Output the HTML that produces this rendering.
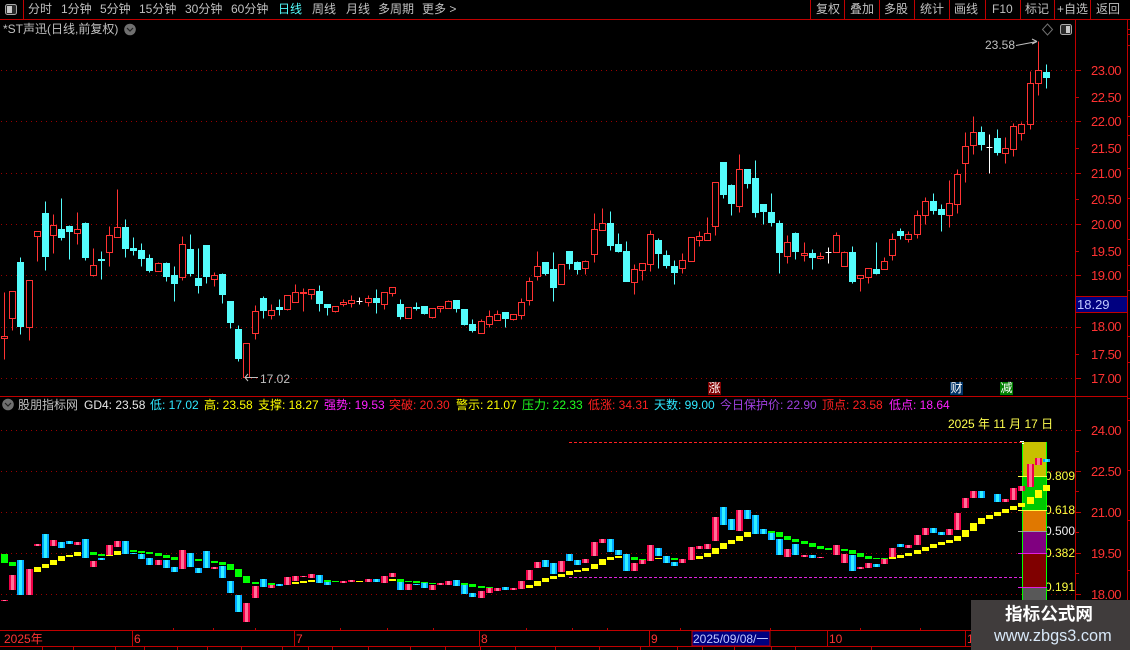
<!DOCTYPE html>
<html><head><meta charset="utf-8"><style>
html,body{margin:0;padding:0;background:#000}
#p{position:relative;width:1130px;height:650px;overflow:hidden;background:#000;font:12px/12px "Liberation Sans","WenQuanYi Zen Hei","Noto Sans CJK SC",sans-serif;color:#c0c0c0}
#p>svg{position:absolute;left:0;top:0}
.t{position:absolute;white-space:nowrap}
.a{position:absolute;left:1091px;color:#ff3232;font-size:13px;letter-spacing:-.5px;white-space:nowrap;margin-top:1px}
.f{position:absolute;left:1047px;width:28px;overflow:hidden;white-space:nowrap;text-indent:-2px;color:#ffff40}
.m{position:absolute;width:13px;height:13px;color:#fff;text-align:center;line-height:13px}
</style></head><body><div id="p">
<svg width="1130" height="650" viewBox="0 0 1130 650">
<defs>
<path id="pk" d="M4 600V601M12 575V590M29 569V595M37 544V546M53 540V546M77 542V545M93 561V567M109 545V555M117 541V547M158 560V565M182 550V569M214 567V569M246 603V622M255 586V598M271 585V588M287 577V585M295 576V581M303 576V577M311 574V578M343 581V583M351 580V582M368 579V582M384 576V583M392 573V577M408 584V590M432 585V590M440 583V585M448 581V585M481 591V598M489 588V593M497 588V591M513 588V590M521 581V589M529 570V580M537 562V568M561 561V572M585 559V563M594 542V556M602 539V543M634 563V571M642 560V564M650 545V561M682 559V563M691 547V560M699 546V549M707 544V549M715 517V541M739 510V531M787 549V557M804 555V557M820 557V558M836 545V555M844 554V563M860 567V569M868 563V568M884 559V564M892 548V557M908 545V548M917 535V545M925 528V535M949 529V535M957 513V530M965 498V508M973 491V498M1005 499V502M1013 488V500M1021 486V491M1030 464V487M1038 458V465"/>
<path id="bl" d="M20 560V595M45 534V558M61 542V548M69 541V544M85 539V558M101 558V560M125 541V554M133 553V554M141 554V559M149 558V565M166 560V568M174 567V572M190 553V567M198 568V573M206 551V568M222 566V578M230 581V593M238 595V612M263 579V587M279 584V586M319 575V583M327 582V585M376 579V582M400 582V590M416 584V585M424 583V588M456 580V586M464 585V594M472 593V597M505 587V590M545 560V567M553 563V574M569 554V561M577 560V565M610 539V552M618 550V555M626 554V571M658 548V556M666 556V563M674 562V566M723 507V525M731 519V530M747 510V519M755 515V534M763 529V534M771 533V540M779 539V555M795 544V555M812 555V558M852 555V571M876 564V567M900 544V547M933 528V533M941 532V535M981 491V498M997 494V502M1046 459V462"/>
</defs>
<g stroke="#990000" stroke-width="1" stroke-dasharray="1 4" fill="none">
<path d="M1 70.5H1075M1 121.5H1075M1 173.5H1075M1 224.5H1075M1 275.5H1075M1 327.5H1075M1 378.5H1075M1 430.5H1075M1 471.5H1075M1 512.5H1075M1 553.5H1075M1 594.5H1075"/>
</g>
<g transform="translate(.5 .5)" fill="none" shape-rendering="crispEdges">
<path stroke="#ff3232" d="M4 292V359M12 291V330M29 280V340M37 231V261M53 214V253M77 212V244M93 248V276M109 226V266M117 189V237M158 262V271M182 236V280M214 272V286M246 343V377M255 305V339M271 304V319M287 295V310M295 284V302M303 288V311M311 289V299M335 306V312M343 299V306M351 295V307M368 295V306M384 292V309M392 287V296M408 307V318M432 308V318M440 306V312M448 300V308M481 319V333M489 310V327M497 310V320M513 314V320M521 298V319M529 277V305M537 251V280M561 264V284M585 260V274M594 213V262M602 208V230M634 264V294M642 263V280M650 230V271M682 253V273M691 237V261M699 231V246M707 217V240M715 182V235M739 154V212M787 235V263M804 242V261M820 252V259M836 232V252M844 251V266M860 275V291M868 268V283M884 257V269M892 233V260M908 231V242M917 210V238M925 197V224M949 180V227M957 169V213M965 132V182M973 116V154M1005 137V163M1013 123V156M1021 122V140M1030 71V129M1038 41V95"/>
<path stroke="#ff3232" fill="#000" d="M1 336h6v2h-6zM9 291h6v27h-6zM26 280h6v47h-6zM34 231h6v5h-6zM50 225h6v10h-6zM74 229h6v4h-6zM90 265h6v10h-6zM106 235h6v17h-6zM114 227h6v10h-6zM155 263h6v8h-6zM179 244h6v33h-6zM211 275h6v4h-6zM243 343h6v34h-6zM252 311h6v22h-6zM268 310h6v5h-6zM284 295h6v14h-6zM292 292h6v10h-6zM300 292h6v1h-6zM308 289h6v5h-6zM332 306h6v5h-6zM340 302h6v2h-6zM348 300h6v3h-6zM365 298h6v4h-6zM381 292h6v12h-6zM389 287h6v6h-6zM405 307h6v11h-6zM429 308h6v9h-6zM437 306h6v2h-6zM445 301h6v7h-6zM478 321h6v12h-6zM486 316h6v8h-6zM494 314h6v6h-6zM510 314h6v5h-6zM518 302h6v13h-6zM526 281h6v19h-6zM534 266h6v10h-6zM558 264h6v20h-6zM582 261h6v7h-6zM591 229h6v25h-6zM599 223h6v7h-6zM631 269h6v13h-6zM639 263h6v7h-6zM647 234h6v30h-6zM679 260h6v8h-6zM688 237h6v24h-6zM696 236h6v4h-6zM704 233h6v7h-6zM712 182h6v44h-6zM736 169h6v37h-6zM784 242h6v14h-6zM801 253h6v2h-6zM817 256h6v2h-6zM833 235h6v17h-6zM841 252h6v14h-6zM857 275h6v3h-6zM865 268h6v9h-6zM881 261h6v8h-6zM889 239h6v16h-6zM905 234h6v5h-6zM914 215h6v19h-6zM922 201h6v14h-6zM946 203h6v12h-6zM954 174h6v30h-6zM962 146h6v17h-6zM970 132h6v13h-6zM1002 148h6v5h-6zM1010 126h6v23h-6zM1018 124h6v9h-6zM1027 83h6v41h-6zM1035 70h6v13h-6z"/>
<path stroke="#54fcfc" d="M20 257V334M45 201V270M61 198V240M69 225V259M85 222V260M101 251V279M125 219V257M133 237V255M141 243V266M149 254V272M166 262V281M174 266V301M190 234V276M198 248V293M206 245V283M222 273V303M230 301V328M238 325V361M263 296V318M279 299V315M319 285V311M327 304V315M376 289V313M400 299V319M416 302V310M424 306V314M456 300V312M464 309V325M472 319V332M505 312V327M545 262V275M553 252V301M569 251V269M577 261V274M610 211V250M618 233V252M626 241V281M658 238V268M666 250V268M674 260V284M723 162V198M731 184V215M747 169V188M755 160V217M763 204V224M771 193V226M779 220V273M795 232V259M812 249V269M852 246V283M876 242V274M900 228V239M933 193V214M941 204V231M981 126V150M997 129V155M1046 64V88"/>
<path stroke="#54fcfc" fill="#54fcfc" d="M17 262h6v64h-6zM42 213h6v43h-6zM58 229h6v8h-6zM66 226h6v5h-6zM82 223h6v34h-6zM98 259h6v1h-6zM122 227h6v21h-6zM130 248h6v2h-6zM138 250h6v8h-6zM146 258h6v12h-6zM163 263h6v13h-6zM171 275h6v8h-6zM187 249h6v24h-6zM195 278h6v7h-6zM203 245h6v31h-6zM219 274h6v20h-6zM227 301h6v21h-6zM235 329h6v29h-6zM260 298h6v12h-6zM276 307h6v2h-6zM316 291h6v12h-6zM324 304h6v3h-6zM373 298h6v4h-6zM397 304h6v12h-6zM413 307h6v1h-6zM421 306h6v7h-6zM453 300h6v8h-6zM461 309h6v15h-6zM469 324h6v6h-6zM502 312h6v6h-6zM542 262h6v11h-6zM550 269h6v18h-6zM566 251h6v12h-6zM574 262h6v7h-6zM607 223h6v22h-6zM615 244h6v7h-6zM623 251h6v30h-6zM655 240h6v13h-6zM663 255h6v10h-6zM671 266h6v6h-6zM720 162h6v32h-6zM728 185h6v18h-6zM744 169h6v14h-6zM752 178h6v34h-6zM760 204h6v7h-6zM768 212h6v10h-6zM776 223h6v29h-6zM792 233h6v18h-6zM809 253h6v4h-6zM849 252h6v29h-6zM873 269h6v4h-6zM897 231h6v4h-6zM930 201h6v9h-6zM938 209h6v5h-6zM978 132h6v12h-6zM994 138h6v14h-6zM1043 72h6v5h-6z"/>
<path stroke="#fff" d="M359 297V304M356 301H362M828 247V263M825 252H831M989 134V173M986 147H992"/>
</g>
<g fill="none" stroke="#c0c0c0">
<path d="M245 377.5H258M245 377.5L248 374M245 377.5L248 381"/>
<path d="M1016 45.5L1037 41.5M1037 41.5L1032 39M1037 41.5L1032 44"/>
</g>
<g fill="none" stroke="#c00000" shape-rendering="crispEdges">
<path d="M0 19.5H1130M23.5 0V19M810.5 0V19M844.5 0V19M879.5 0V19M914.5 0V19M949.5 0V19M985.5 0V19M1020.5 0V19M1054.5 0V19M1090.5 0V19M1075.5 19V646M1127.5 20V630M0 396.5H1127"/>
<path d="M1075 70.5H1081M1075 97.5H1079M1075 121.5H1081M1075 148.5H1079M1075 173.5H1081M1075 199.5H1079M1075 224.5H1081M1075 251.5H1079M1075 275.5H1081M1075 327.5H1081M1075 354.5H1079M1075 378.5H1081M1075 430.5H1081M1075 451.5H1079M1075 471.5H1081M1075 491.5H1079M1075 512.5H1081M1075 532.5H1079M1075 553.5H1081M1075 573.5H1079M1075 594.5H1081"/>
<path d="M1127 239.5H1130M1127 336.5H1130M1128 29.5H1130M1128 34.5H1130M1128 45.5H1130M1128 116.5H1130M1128 135.5H1130M1128 168.5H1130M1128 198.5H1130M1128 265.5H1130M1128 290.5H1130M1128 362.5H1130M1128 398.5H1130M1128 420.5H1130M1128 470.5H1130M1128 520.5H1130M1128 570.5H1130"/>
<path d="M0 630.5H1075M0 646.5H1075M132.5 630V646M294.5 630V646M479.5 630V646M649.5 630V646M827.5 630V646M965.5 630V646M173.5 628V630M213.5 628V630M255.5 628V630M340.5 628V630M387.5 628V630M433.5 628V630M526.5 628V630M572.5 628V630M607.5 628V630M680.5 628V630M770.5 628V630M860.5 628V630M920.5 628V630M42.5 646V650M73.5 646V650M115.5 646V650M144.5 646V650M177.5 646V650M207.5 646V650M241.5 646V650M282.5 646V650M308.5 646V650M332.5 646V650M368.5 646V650M410.5 646V650M445.5 646V650M480.5 646V650M515.5 646V650M555.5 646V650M599.5 646V650M640.5 646V650M677.5 646V650M702.5 646V650M734.5 646V650M771.5 646V650M795.5 646V650M871.5 646V650"/>
</g>
<rect x="692" y="631" width="78" height="15" fill="#000080" stroke="#c00000"/>
<rect x="1075.5" y="296.5" width="52" height="16" fill="#000080" stroke="#c00000"/>
<g fill="none" stroke-dasharray="3 2" shape-rendering="crispEdges">
<path stroke="#ff2020" d="M569 442.5H1022"/>
<path stroke="#e020e0" d="M569 577.5H1022"/>
</g>
<rect x="1023" y="442" width="23" height="35" fill="#c8c000"/>
<rect x="1023" y="477" width="23" height="33" fill="#00c800"/>
<rect x="1023" y="511" width="23" height="21" fill="#e07800"/>
<rect x="1023" y="532" width="23" height="22" fill="#800080"/>
<rect x="1023" y="554" width="23" height="33" fill="#800000"/>
<rect x="1023" y="587" width="23" height="20" fill="#585858"/>
<g shape-rendering="crispEdges" fill="none">
<path stroke="#00ff00" d="M1022.5 442V610M1046.5 442V610"/>
<path stroke="#ffff40" d="M1018 476.5H1047M1018 510.5H1047"/>
<path stroke="#a0a0a0" d="M1018 531.5H1047"/>
<path stroke="#e020e0" d="M1018 553.5H1047M1018 587.5H1047"/>
<path stroke="#fff" d="M1020 441.5H1024M1022 443.5H1024"/>
</g>
<g transform="translate(.5 0)" fill="none" shape-rendering="crispEdges" stroke-width="7">
<g stroke="#f00048"><use href="#pk"/></g>
<g stroke="#ff7098" stroke-width="3"><use href="#pk"/></g>
<g stroke="#00a8ff"><use href="#bl"/></g>
<g stroke="#30f0ff" stroke-width="3"><use href="#bl"/></g>
<path stroke="#00ff00" d="M4 554V563M12 562V566M93 552V555M101 554V556M133 550V552M141 551V553M149 552V554M158 553V556M166 555V558M174 557V560M198 559V561M214 561V563M222 562V565M230 564V570M238 569V577M246 576V583M255 582V584M271 583V585M327 580V582M335 581V582M400 579V582M408 581V582M416 581V583M424 582V583M432 583V584M464 583V585M472 584V587M481 586V588M489 587V588M634 557V560M642 559V560M674 558V560M771 531V533M779 532V537M787 536V540M795 539V542M804 541V544M812 543V547M820 546V549M828 548V550M844 549V551M852 550V554M860 553V557M868 556V559M876 558V559M884 558V559"/>
<path stroke="#ffff00" d="M37 567V572M45 564V568M53 560V565M61 556V561M69 555V557M77 552V556M109 555V556M117 551V555M295 582V584M303 581V583M311 580V582M359 581V582M392 579V581M529 585V588M537 581V586M545 578V582M553 576V579M561 574V577M569 571V575M577 570V572M585 568V571M594 564V569M602 559V565M610 557V560M618 556V558M658 558V559M699 556V559M707 553V557M715 548V554M723 543V549M731 540V544M739 536V541M747 532V537M892 557V559M900 555V558M908 553V556M917 550V554M925 547V551M933 544V548M941 542V545M949 540V543M957 536V541M965 530V537M973 523V531M981 518V524M989 515V519M997 512V516M1005 509V513M1013 506V510M1021 503V507M1030 497V504M1038 490V498M1046 485V491"/>
</g>
<g>
<rect x="5.5" y="4.5" width="11" height="10" rx="2" fill="#2a2a2a" stroke="#a8a8a8"/><rect x="7" y="6" width="5" height="7" fill="#c8c8c8"/>
<rect x="1060.5" y="24.5" width="11" height="10" rx="2" fill="#2a2a2a" stroke="#a8a8a8"/><rect x="1066" y="26" width="4" height="7" fill="#c8c8c8"/>
<path d="M1047.5 24L1052.5 29.5L1047.5 35L1042.5 29.5Z" fill="none" stroke="#707070"/>
<circle cx="130" cy="29.5" r="5.8" fill="#707070"/><path d="M127 28L130 31L133 28" fill="none" stroke="#222" stroke-width="1.2"/>
<circle cx="8" cy="404.5" r="5.8" fill="#707070"/><path d="M5 403L8 406L11 403" fill="none" stroke="#222" stroke-width="1.2"/>
</g>
</svg>

<div class="t" style="left:28px;top:3px">分时</div>
<div class="t" style="left:61px;top:3px">1分钟</div>
<div class="t" style="left:100px;top:3px">5分钟</div>
<div class="t" style="left:139px;top:3px">15分钟</div>
<div class="t" style="left:185px;top:3px">30分钟</div>
<div class="t" style="left:231px;top:3px">60分钟</div>
<div class="t" style="left:278px;top:3px;color:#54fcfc">日线</div>
<div class="t" style="left:312px;top:3px">周线</div>
<div class="t" style="left:346px;top:3px">月线</div>
<div class="t" style="left:378px;top:3px">多周期</div>
<div class="t" style="left:422px;top:3px">更多 &gt;</div>
<div class="t" style="left:816px;top:3px">复权</div>
<div class="t" style="left:850px;top:3px">叠加</div>
<div class="t" style="left:884px;top:3px">多股</div>
<div class="t" style="left:920px;top:3px">统计</div>
<div class="t" style="left:954px;top:3px">画线</div>
<div class="t" style="left:992px;top:3px">F10</div>
<div class="t" style="left:1025px;top:3px">标记</div>
<div class="t" style="left:1057px;top:3px">+自选</div>
<div class="t" style="left:1096px;top:3px">返回</div>
<div class="t" style="left:3px;top:23px">*ST声迅(日线,前复权)</div>
<div class="t" style="left:985px;top:39px">23.58</div>
<div class="t" style="left:260px;top:373px">17.02</div>

<div class="a" style="top:64px">23.00</div>
<div class="a" style="top:91px">22.50</div>
<div class="a" style="top:115px">22.00</div>
<div class="a" style="top:142px">21.50</div>
<div class="a" style="top:167px">21.00</div>
<div class="a" style="top:193px">20.50</div>
<div class="a" style="top:218px">20.00</div>
<div class="a" style="top:245px">19.50</div>
<div class="a" style="top:269px">19.00</div>
<div class="a" style="top:320px">18.00</div>
<div class="a" style="top:348px">17.50</div>
<div class="a" style="top:372px">17.00</div>
<div class="a" style="top:424px">24.00</div>
<div class="a" style="top:465px">22.50</div>
<div class="a" style="top:506px">21.00</div>
<div class="a" style="top:547px">19.50</div>
<div class="a" style="top:588px">18.00</div>
<div class="t" style="left:1077px;top:299px;color:#c0c8ff;font-size:13px">18.29</div>

<div class="m" style="left:708px;top:382px;background:#800000">涨</div>
<div class="m" style="left:950px;top:382px;background:#003366">财</div>
<div class="m" style="left:1000px;top:382px;background:#008000">减</div>

<div class="t" style="left:18px;top:399px">股朋指标网</div>
<div class="t" style="left:84px;top:399px;color:#e8e8e8">GD4: 23.58</div>
<div class="t" style="left:150px;top:399px;color:#30e8ff">低: 17.02</div>
<div class="t" style="left:204px;top:399px;color:#ffff00">高: 23.58</div>
<div class="t" style="left:258px;top:399px;color:#ffff00">支撑: 18.27</div>
<div class="t" style="left:324px;top:399px;color:#ff20ff">强势: 19.53</div>
<div class="t" style="left:389px;top:399px;color:#ff2020">突破: 20.30</div>
<div class="t" style="left:456px;top:399px;color:#ffff00">警示: 21.07</div>
<div class="t" style="left:522px;top:399px;color:#20ff20">压力: 22.33</div>
<div class="t" style="left:588px;top:399px;color:#ff2020">低涨: 34.31</div>
<div class="t" style="left:654px;top:399px;color:#30e8ff">天数: 99.00</div>
<div class="t" style="left:720px;top:399px;color:#a040e0">今日保护价: 22.90</div>
<div class="t" style="left:822px;top:399px;color:#ff2020">顶点: 23.58</div>
<div class="t" style="left:889px;top:399px;color:#ff20ff">低点: 18.64</div>
<div class="t" style="left:948px;top:418px;color:#ffff50">2025 年 11 月 17 日</div>

<div class="f" style="top:470px">0.809</div>
<div class="f" style="top:504px">0.618</div>
<div class="f" style="top:525px;color:#f0f0f0">0.500</div>
<div class="f" style="top:547px">0.382</div>
<div class="f" style="top:581px">0.191</div>

<div class="t" style="left:4px;top:633px;color:#ff3232">2025年</div>
<div class="t" style="left:134px;top:633px;color:#ff3232">6</div>
<div class="t" style="left:296px;top:633px;color:#ff3232">7</div>
<div class="t" style="left:481px;top:633px;color:#ff3232">8</div>
<div class="t" style="left:651px;top:633px;color:#ff3232">9</div>
<div class="t" style="left:693px;top:633px;color:#c0c8ff">2025/09/08/一</div>
<div class="t" style="left:829px;top:633px;color:#ff3232">10</div>
<div class="t" style="left:967px;top:633px;color:#ff3232">1</div>

<div style="position:absolute;left:971px;top:600px;width:159px;height:50px;background:#403c3c"></div>
<div class="t" style="left:1005px;top:605px;width:90px;font:bold 17.6px/18px 'Noto Sans CJK SC',sans-serif;color:#fff">指标公式网</div>
<div class="t" style="left:994px;top:627px;font:16.3px/18px 'Liberation Sans',sans-serif;color:#d8e8f8">www.zbgs3.com</div>
</div></body></html>
